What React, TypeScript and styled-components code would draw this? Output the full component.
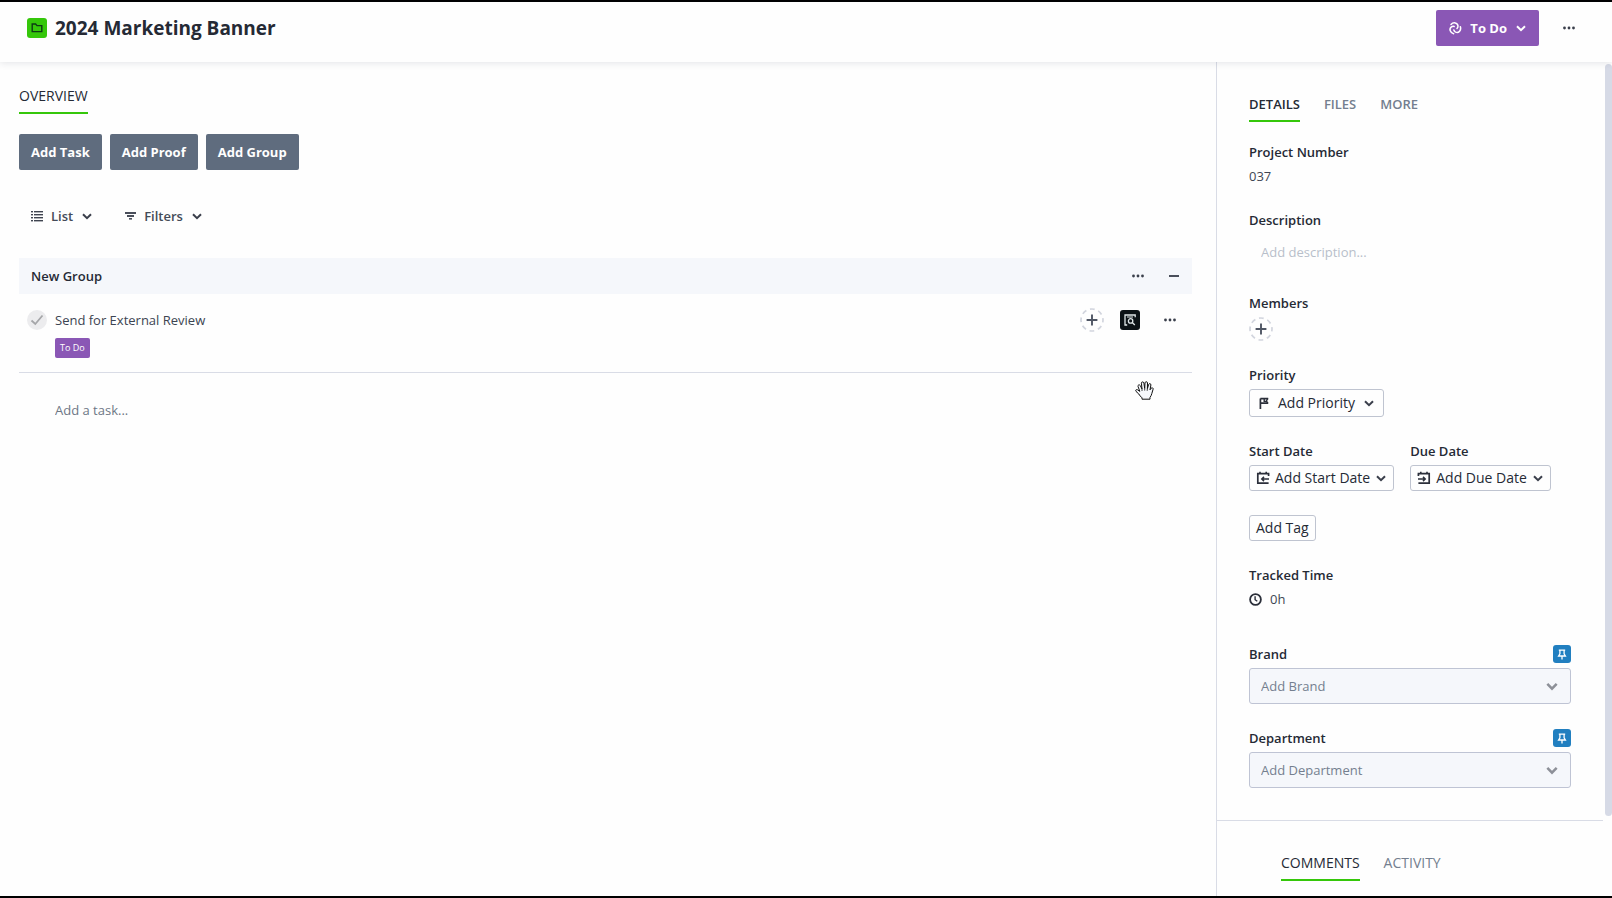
import React from "react";
import styled, { createGlobalStyle } from "styled-components";

const ink = "#252a35";
const slate = "#5f6c7e";
const muted = "#747f8f";
const green = "#35c70a";
const purple = "#8a57b5";
const line = "#d9dce6";
const field = "#f5f7fb";

const GlobalStyle = createGlobalStyle`
  * { box-sizing: border-box; }
  body { margin: 0; background: #fefefe; }
  body, button, input, select {
    font-family: "Open Sans", "Noto Sans", sans-serif;
    font-size: 13px;
    line-height: 20px;
    color: ${ink};
  }
  button { cursor: pointer; }
  svg { display: block; flex: none; }
`;

const Page = styled.div`
  display: flex;
  flex-direction: column;
  min-height: 100vh;
  border: solid #000;
  border-width: 2px 0;
`;

const Header = styled.header`
  position: relative;
  z-index: 1;
  display: flex;
  align-items: flex-start;
  justify-content: space-between;
  height: 60px;
  padding: 8px 37px 0 27px;
  background: #fefefe;
  box-shadow: 0 1px 7px rgba(40, 50, 70, 0.13);
`;

const Row = styled.div<{ $gap: number }>`
  display: flex;
  align-items: center;
  gap: ${(p) => p.$gap}px;
`;

const HeaderRow = styled(Row)`
  height: 36px;
`;

const Tile = styled.span<{ $bg: string; $size: number }>`
  display: grid;
  place-items: center;
  width: ${(p) => p.$size}px;
  height: ${(p) => p.$size}px;
  border-radius: 3px;
  background: ${(p) => p.$bg};
`;

const Title = styled.h1`
  margin: 0;
  font-size: 19px;
  line-height: 28px;
  font-weight: 700;
`;

const Solid = styled.button<{ $bg: string }>`
  display: flex;
  align-items: center;
  gap: 8px;
  height: 36px;
  padding: 0 12px;
  border: 0;
  border-radius: 2px;
  background: ${(p) => p.$bg};
  color: #fff;
  font-weight: 700;
`;

const Plain = styled.button`
  display: flex;
  align-items: center;
  gap: 8px;
  padding: 0;
  border: 0;
  background: none;
  font-weight: 600;
  color: #444b58;
`;

const Body = styled.div`
  flex: 1;
  display: grid;
  grid-template-columns: minmax(0, 1fr) 396px;
`;

const Main = styled.main`
  padding: 24px 24px 24px 19px;
`;

const Tabs = styled.nav`
  display: flex;
  gap: 24px;
`;

const Tab = styled.button<{ $active?: boolean; $compact?: boolean }>`
  padding: 0 0 6px;
  border: 0;
  border-bottom: 2px solid ${(p) => (p.$active ? green : "transparent")};
  background: none;
  color: ${(p) => (p.$active ? ink : muted)};
  font-size: ${(p) => (p.$compact ? 13 : 14)}px;
  font-weight: ${(p) => (p.$compact ? 600 : 400)};
`;

const Actions = styled(Row)`
  margin-top: 20px;
`;

const ViewBar = styled(Row)`
  height: 36px;
  margin-top: 28px;
  padding: 0 12px;
`;

const Group = styled.section`
  position: relative;
  margin-top: 24px;
`;

const GroupHeader = styled.div`
  display: flex;
  align-items: center;
  justify-content: space-between;
  height: 36px;
  padding: 0 12px;
  background: ${field};
`;

const GroupName = styled.h2`
  margin: 0;
  font-size: 13px;
  line-height: 20px;
  font-weight: 600;
`;

const TaskRow = styled.div`
  display: flex;
  align-items: flex-start;
  gap: 8px;
  padding: 16px 16px 14px 8px;
  border-bottom: 1px solid ${line};
`;

const TaskText = styled.div`
  flex: 1;
  display: flex;
  flex-direction: column;
  align-items: flex-start;
  gap: 8px;
`;

const TaskName = styled.label`
  color: #3c4452;
`;

const Check = styled.span`
  display: grid;
  place-items: center;
  & > * { grid-area: 1 / 1; }
  svg { pointer-events: none; }
`;

const CheckInput = styled.input`
  appearance: none;
  width: 20px;
  height: 20px;
  margin: 0;
  border-radius: 50%;
  background: #ececee;
`;

const Badge = styled.span`
  padding: 0 5px;
  border-radius: 2px;
  background: ${purple};
  color: #fff;
  font-size: 9px;
`;

const TaskTools = styled(Row)`
  height: 20px;
`;

const AddTask = styled.input`
  display: block;
  width: calc(100% - 36px);
  margin: 27px 0 0 36px;
  padding: 0;
  border: 0;
  background: none;
  outline: none;
  &::placeholder { color: #6d7785; opacity: 1; }
`;

const Pointer = styled.div`
  position: absolute;
  top: 123px;
  right: 38px;
`;

const Side = styled.aside`
  display: flex;
  border-left: 1px solid ${line};
`;

const SideContent = styled.div`
  flex: 1;
`;

const Details = styled.div`
  padding: 32px;
  border-bottom: 1px solid ${line};
`;

const Fields = styled.div`
  display: flex;
  flex-direction: column;
  align-items: flex-start;
  gap: 24px;
  margin-top: 20px;
`;

const Field = styled.div<{ $wide?: boolean; $spaced?: boolean }>`
  display: flex;
  flex-direction: column;
  align-items: flex-start;
  gap: 4px;
  width: ${(p) => (p.$wide ? "100%" : "auto")};
  margin-top: ${(p) => (p.$spaced ? 11 : 0)}px;
`;

const Label = styled.label`
  font-weight: 600;
`;

const LabelRow = styled.div`
  display: flex;
  align-items: center;
  justify-content: space-between;
  width: 100%;
`;

const Value = styled.div`
  display: flex;
  align-items: center;
  gap: 8px;
  height: 20px;
  color: #3f4653;
`;

const Description = styled.input`
  width: 100%;
  height: 35px;
  padding: 0 12px;
  border: 0;
  background: none;
  outline: none;
  &::placeholder { color: #b8bfca; opacity: 1; }
`;

const Outline = styled.button<{ $h: number; $roomy?: boolean }>`
  display: flex;
  align-items: center;
  gap: ${(p) => (p.$roomy ? 8 : 5)}px;
  height: ${(p) => p.$h}px;
  padding: 0 ${(p) => (p.$roomy ? 8 : 6)}px;
  border: 1px solid #bfc4d0;
  border-radius: 3px;
  background: #fefefe;
  font-size: 14px;
  font-weight: 500;
`;

const SelectBox = styled.div`
  display: grid;
  align-items: center;
  width: 100%;
  & > * { grid-area: 1 / 1; }
  svg {
    justify-self: end;
    margin-right: 12px;
    pointer-events: none;
  }
`;

const Select = styled.select`
  appearance: none;
  width: 100%;
  height: 36px;
  padding: 0 11px;
  border: 1px solid #bfc4d4;
  border-radius: 3px;
  background: ${field};
  color: ${muted};
`;

const Feed = styled.div`
  padding: 32px 64px 14px;
`;

const Rail = styled.div`
  width: 9px;
  padding: 2px 0 0 2px;
`;

const Thumb = styled.div`
  height: calc(100% - 80px);
  border-radius: 4px;
  background: #d6dae6;
`;

const Chevron = ({ size = 12, color = "#3a3f4b", width = 2 }) => (
  <svg width={size} height={size} viewBox="0 0 12 12" fill="none" stroke={color} strokeWidth={width}>
    <path d="M2 4.2 6 8.2 10 4.2" />
  </svg>
);

const Dots = () => (
  <svg width="12" height="12" viewBox="0 0 12 12" fill="#3a3f4b">
    <circle cx="1.5" cy="6" r="1.4" />
    <circle cx="6" cy="6" r="1.4" />
    <circle cx="10.5" cy="6" r="1.4" />
  </svg>
);

const FolderIcon = () => (
  <svg width="12" height="12" viewBox="0 0 12 12" fill="none" stroke="#0d3a14" strokeWidth="1.4">
    <path d="M1.2 2h3.4l1.4 1.6h4.8v6H1.2z" />
  </svg>
);

const StatusIcon = () => (
  <svg width="14" height="14" viewBox="0 0 14 14" fill="none" stroke="#fff" strokeWidth="1.5" strokeLinecap="round">
    {[0, 120, 240].map((a) => (
      <path key={a} transform={`rotate(${a} 7 7.3)`} d="M3 3.4C5.2.9 9.6 1.4 10 4.9c.1 1.2-.4 2-1 2.6" />
    ))}
  </svg>
);

const ListIcon = () => (
  <svg width="12" height="12" viewBox="0 0 12 12" fill="#3f4450">
    {[1, 4, 7, 10].map((y) => (
      <React.Fragment key={y}>
        <rect x="0" y={y} width="2" height="1.4" />
        <rect x="3" y={y} width="9" height="1.4" />
      </React.Fragment>
    ))}
  </svg>
);

const FilterIcon = () => (
  <svg width="11" height="12" viewBox="0 0 11 12" fill="#4a4f5b">
    <rect x="0" y="2" width="11" height="2" />
    <rect x="2" y="5" width="7" height="2" />
    <rect x="4" y="8" width="3" height="1.6" />
  </svg>
);

const MinusIcon = () => (
  <svg width="12" height="12" viewBox="0 0 12 12" fill="#4a4f5b">
    <rect x="1" y="5" width="10" height="2" />
  </svg>
);

const TickIcon = () => (
  <svg width="14" height="14" viewBox="0 0 14 14" fill="none" stroke="#a5a6a9" strokeWidth="1.8">
    <path d="M1.5 7.5 5.3 11 12.5 2.5" />
  </svg>
);

const AddPersonIcon = () => (
  <svg width="24" height="24" viewBox="0 0 24 24" fill="none">
    <circle cx="12" cy="12" r="11" stroke="#d2d5de" strokeWidth="1.7" strokeDasharray="4.8 3.84" strokeDashoffset="2.4" />
    <path d="M12 6.6v10.8M6.6 12h10.8" stroke="#4f5664" strokeWidth="1.9" />
  </svg>
);

const ReviewIcon = () => (
  <svg width="12" height="12" viewBox="0 0 12 12" fill="none" stroke="#dfe6e8" strokeWidth="1.3">
    <path d="M11.2 3.2V1H1v10h2.2" />
    <path d="M3 3h6" strokeWidth="1" />
    <circle cx="6.6" cy="6.9" r="2.2" />
    <path d="M8.2 8.5 10.8 11" />
  </svg>
);

const FlagIcon = () => (
  <svg width="12" height="12" viewBox="0 0 12 12" fill="none" stroke="#2b2f3a" strokeWidth="1.7">
    <path d="M2.4 12V1.4M2.4 1.6h7.8M2.4 6.2h7.8" />
    <path d="M9.8 1.4 8.4 3.9l1.4 2.4M6.2 1.6V4.4h2.4" strokeWidth="1.4" />
  </svg>
);

const StartIcon = () => (
  <svg width="14" height="14" viewBox="0 0 14 14" fill="none" stroke="#2b2f3a">
    <path d="M12.6 5V2.7M1 2.7h12.4M12.6 12.2H1.8V2" strokeWidth="1.7" />
    <path d="M4 .8v2M10.2 .8v2" strokeWidth="1.6" />
    <path d="M13 8H5.8M8 5.9 5.8 8 8 10.1" strokeWidth="1.5" />
  </svg>
);

const DueIcon = () => (
  <svg width="14" height="14" viewBox="0 0 14 14" fill="none" stroke="#2b2f3a">
    <path d="M1.4 5V2.7M.6 2.7H13M1.4 12.2h10.8V2" strokeWidth="1.7" />
    <path d="M3.8 .8v2M10 .8v2" strokeWidth="1.6" />
    <path d="M1 8h7.2M6 5.9 8.2 8 6 10.1" strokeWidth="1.5" />
  </svg>
);

const ClockIcon = () => (
  <svg width="13" height="13" viewBox="0 0 13 13" fill="none" stroke="#2b2f3a" strokeWidth="1.8">
    <circle cx="6.5" cy="6.5" r="5.4" />
    <path d="M6.1 3.2v3.5l2.2 1.6" strokeWidth="1.4" />
  </svg>
);

const PinIcon = () => (
  <svg width="10" height="11" viewBox="0 0 10 11" fill="none" stroke="#fff" strokeWidth="1.3">
    <path d="M1.8 1.2h6.4M2.9 1.2v3.7L1.6 7h6.8L7.1 4.9V1.2M5 7v3.4" />
  </svg>
);

const HandIcon = () => (
  <svg width="19" height="19" viewBox="0 0 19 19" fill="#f6f8fc" stroke="#111" strokeWidth="1" strokeLinejoin="round">
    <path d="M7 18.2v-1.4C5.6 15.6 4.6 14.4 3.8 13L1 10.4c-1-1.2.4-2.3 1.6-1.6l2.2 1.6L3 5.4c-.4-1.5 1.5-2.2 2.3-.8L7 8 6.4 2.2c0-1.7 2.2-1.7 2.5-.1L9.7 7.4 10 1.8c.2-1.5 2.4-1.4 2.5.1L12.4 7.6l1.3-4.2c.5-1.4 2.4-.9 2.2.6L15 8.8l1.2-1.6c.8-1 2.3-.2 1.9 1L16.8 12.6c-.3 1.4-.9 2.6-1.8 3.8v1.8z" />
    <path d="M7 8v2M9.7 7.4v2.2M12.4 7.6l-.2 2.2" strokeWidth=".8" />
  </svg>
);

const PinnedSelect = ({ name, spaced }: { name: string; spaced?: boolean }) => (
  <Field $wide $spaced={spaced}>
    <LabelRow>
      <Label htmlFor={name}>{name}</Label>
      <Tile $bg="#217fc0" $size={18}>
        <PinIcon />
      </Tile>
    </LabelRow>
    <SelectBox>
      <Select id={name} defaultValue="">
        <option value="">Add {name}</option>
      </Select>
      <Chevron size={14} color="#8d9098" width={2.2} />
    </SelectBox>
  </Field>
);

export default function App() {
  return (
    <>
      <GlobalStyle />
      <Page>
        <Header>
          <HeaderRow $gap={8}>
            <Tile $bg={green} $size={20}>
              <FolderIcon />
            </Tile>
            <Title>2024 Marketing Banner</Title>
          </HeaderRow>
          <HeaderRow $gap={24}>
            <Solid $bg={purple}>
              <StatusIcon />
              To Do
              <Chevron color="#fff" />
            </Solid>
            <Plain aria-label="Project options">
              <Dots />
            </Plain>
          </HeaderRow>
        </Header>
        <Body>
          <Main>
            <Tabs>
              <Tab $active>OVERVIEW</Tab>
            </Tabs>
            <Actions $gap={8}>
              <Solid $bg={slate}>Add Task</Solid>
              <Solid $bg={slate}>Add Proof</Solid>
              <Solid $bg={slate}>Add Group</Solid>
            </Actions>
            <ViewBar $gap={32}>
              <Plain>
                <ListIcon />
                List
                <Chevron />
              </Plain>
              <Plain>
                <FilterIcon />
                Filters
                <Chevron />
              </Plain>
            </ViewBar>
            <Group>
              <GroupHeader>
                <GroupName>New Group</GroupName>
                <Row $gap={24}>
                  <Plain aria-label="Group options">
                    <Dots />
                  </Plain>
                  <Plain aria-label="Collapse group">
                    <MinusIcon />
                  </Plain>
                </Row>
              </GroupHeader>
              <TaskRow>
                <Check>
                  <CheckInput type="checkbox" id="task" />
                  <TickIcon />
                </Check>
                <TaskText>
                  <TaskName htmlFor="task">Send for External Review</TaskName>
                  <Badge>To Do</Badge>
                </TaskText>
                <TaskTools $gap={24}>
                  <Row $gap={16}>
                    <Plain aria-label="Assign member">
                      <AddPersonIcon />
                    </Plain>
                    <Tile $bg="#0b1216" $size={20}>
                      <ReviewIcon />
                    </Tile>
                  </Row>
                  <Plain aria-label="Task options">
                    <Dots />
                  </Plain>
                </TaskTools>
              </TaskRow>
              <AddTask aria-label="Add a task" placeholder="Add a task..." />
              <Pointer>
                <HandIcon />
              </Pointer>
            </Group>
          </Main>
          <Side>
            <SideContent>
              <Details>
                <Tabs>
                  <Tab $active $compact>DETAILS</Tab>
                  <Tab $compact>FILES</Tab>
                  <Tab $compact>MORE</Tab>
                </Tabs>
                <Fields>
                  <Field>
                    <Label as="span">Project Number</Label>
                    <Value>037</Value>
                  </Field>
                  <Field $wide>
                    <Label htmlFor="description">Description</Label>
                    <Description id="description" placeholder="Add description..." />
                  </Field>
                  <Field>
                    <Label as="span">Members</Label>
                    <Plain aria-label="Add member">
                      <AddPersonIcon />
                    </Plain>
                  </Field>
                  <Field>
                    <Label htmlFor="priority">Priority</Label>
                    <Outline id="priority" $h={28} $roomy>
                      <FlagIcon />
                      Add Priority
                      <Chevron />
                    </Outline>
                  </Field>
                  <Row $gap={16}>
                    <Field>
                      <Label htmlFor="start">Start Date</Label>
                      <Outline id="start" $h={26}>
                        <StartIcon />
                        Add Start Date
                        <Chevron />
                      </Outline>
                    </Field>
                    <Field>
                      <Label htmlFor="due">Due Date</Label>
                      <Outline id="due" $h={26}>
                        <DueIcon />
                        Add Due Date
                        <Chevron />
                      </Outline>
                    </Field>
                  </Row>
                  <Outline $h={26}>Add Tag</Outline>
                  <Field>
                    <Label as="span">Tracked Time</Label>
                    <Value>
                      <ClockIcon />
                      0h
                    </Value>
                  </Field>
                  <PinnedSelect name="Brand" spaced />
                  <PinnedSelect name="Department" />
                </Fields>
              </Details>
              <Feed>
                <Tabs>
                  <Tab $active>COMMENTS</Tab>
                  <Tab>ACTIVITY</Tab>
                </Tabs>
              </Feed>
            </SideContent>
            <Rail>
              <Thumb />
            </Rail>
          </Side>
        </Body>
      </Page>
    </>
  );
}
